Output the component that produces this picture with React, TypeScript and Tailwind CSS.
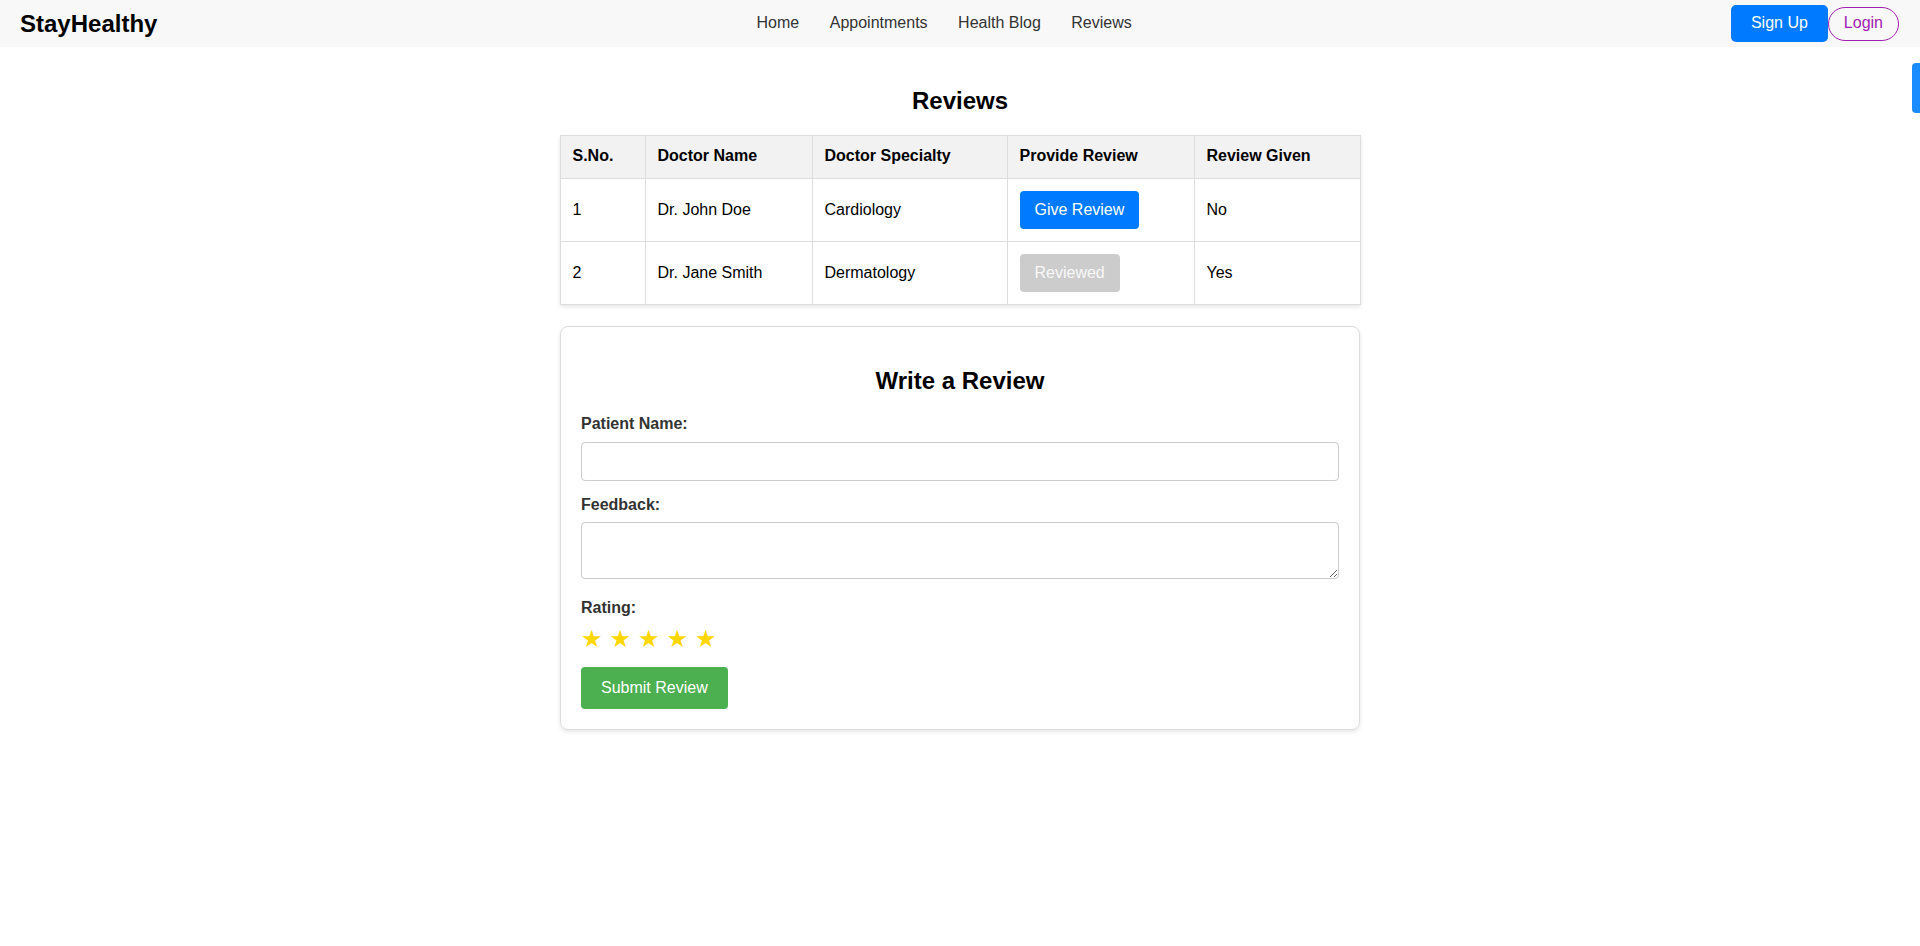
import React, { useState } from 'react'

type Doctor = {
  id: number
  name: string
  specialty: string
  reviewed: boolean
}

const doctors: Doctor[] = [
  { id: 1, name: 'Dr. John Doe', specialty: 'Cardiology', reviewed: false },
  { id: 2, name: 'Dr. Jane Smith', specialty: 'Dermatology', reviewed: true },
]

export default function App() {
  const [name, setName] = useState('')
  const [feedback, setFeedback] = useState('')

  return (
    <div className="min-h-screen bg-white text-black leading-[1.15] font-['Liberation_Sans',Arial,sans-serif]">
      {/* Navbar */}
      <nav className="h-[47px] bg-[#f8f8f8] flex items-center justify-between pl-[20px] pr-[21px]">
        <div className="text-[24px] font-bold text-black">StayHealthy</div>
        <ul className="flex items-center gap-[30.5px] text-[16px] text-[#333]">
          <li>Home</li>
          <li>Appointments</li>
          <li>Health Blog</li>
          <li>Reviews</li>
        </ul>
        <div className="flex items-center">
          <button className="h-[37px] px-[20px] bg-[#007bff] text-white text-[16px] rounded-[5px]">Sign Up</button>
          <button className="h-[34px] px-[15px] border border-[#a020b0] text-[#a020b0] text-[16px] rounded-full bg-transparent">Login</button>
        </div>
      </nav>

      {/* side tab */}
      <div className="fixed right-0 top-[63px] w-[8px] h-[50px] bg-[#1a8cff] rounded-l-[4px]" />

      <main className="pt-[20px]">
        <h2 className="text-[24px] font-bold text-center my-[20px]">Reviews</h2>

        <table className="w-[800px] mx-auto table-fixed border-collapse shadow-[0_2px_4px_rgba(0,0,0,0.1)] text-[16px] text-left">
          <thead>
            <tr className="bg-[#f2f2f2] h-[43px]">
              <th className="w-[85px] border border-[#ddd] px-[12px] font-bold">S.No.</th>
              <th className="w-[167px] border border-[#ddd] px-[12px] font-bold">Doctor Name</th>
              <th className="w-[195px] border border-[#ddd] px-[12px] font-bold">Doctor Specialty</th>
              <th className="w-[187px] border border-[#ddd] px-[12px] font-bold">Provide Review</th>
              <th className="w-[166px] border border-[#ddd] px-[12px] font-bold">Review Given</th>
            </tr>
          </thead>
          <tbody>
            {doctors.map(d => (
              <tr key={d.id} className="h-[63px]">
                <td className="border border-[#ddd] px-[12px] pt-[2px]">{d.id}</td>
                <td className="border border-[#ddd] px-[12px] pt-[2px]">{d.name}</td>
                <td className="border border-[#ddd] px-[12px] pt-[2px]">{d.specialty}</td>
                <td className="border border-[#ddd] px-[12px] pt-[1px]">
                  {d.reviewed ? (
                    <button disabled className="h-[38px] px-[15px] bg-[#cccccc] text-[#f8f8f8] rounded-[4px]">Reviewed</button>
                  ) : (
                    <button className="h-[38px] px-[15px] bg-[#007bff] text-white rounded-[4px]">Give Review</button>
                  )}
                </td>
                <td className="border border-[#ddd] px-[12px] pt-[2px]">{d.reviewed ? 'Yes' : 'No'}</td>
              </tr>
            ))}
          </tbody>
        </table>

        {/* Review form */}
        <div className="w-[800px] mx-auto mt-[21px] border border-[#ddd] rounded-[8px] p-[20px] shadow-[0_2px_4px_rgba(0,0,0,0.1)]">
          <h2 className="text-[24px] font-bold text-center mt-[20px] mb-[21px]">Write a Review</h2>

          <label className="block font-bold text-[16px] text-[#333] mb-[8px]">Patient Name:</label>
          <input
            value={name}
            onChange={e => setName(e.target.value)}
            className="block w-full h-[39px] border border-[#ccc] rounded-[4px] px-[10px] mb-[15px] outline-none"
          />

          <label className="block font-bold text-[16px] text-[#333] mb-[8px]">Feedback:</label>
          <textarea
            value={feedback}
            onChange={e => setFeedback(e.target.value)}
            className="block w-full h-[57px] border border-[#ccc] rounded-[4px] p-[10px] mb-[20px] outline-none"
          />

          <label className="block font-bold text-[16px] text-[#333] mb-[9px]">Rating:</label>
          <div className="flex gap-[7px] text-[24px] text-[#ffd700] font-['DejaVu_Sans',sans-serif] mb-[13px]">
            {[1, 2, 3, 4, 5].map(i => (
              <span key={i}>★</span>
            ))}
          </div>

          <button className="px-[20px] py-[12px] bg-[#4caf50] text-white text-[16px] rounded-[4px]">Submit Review</button>
        </div>
      </main>
    </div>
  )
}
